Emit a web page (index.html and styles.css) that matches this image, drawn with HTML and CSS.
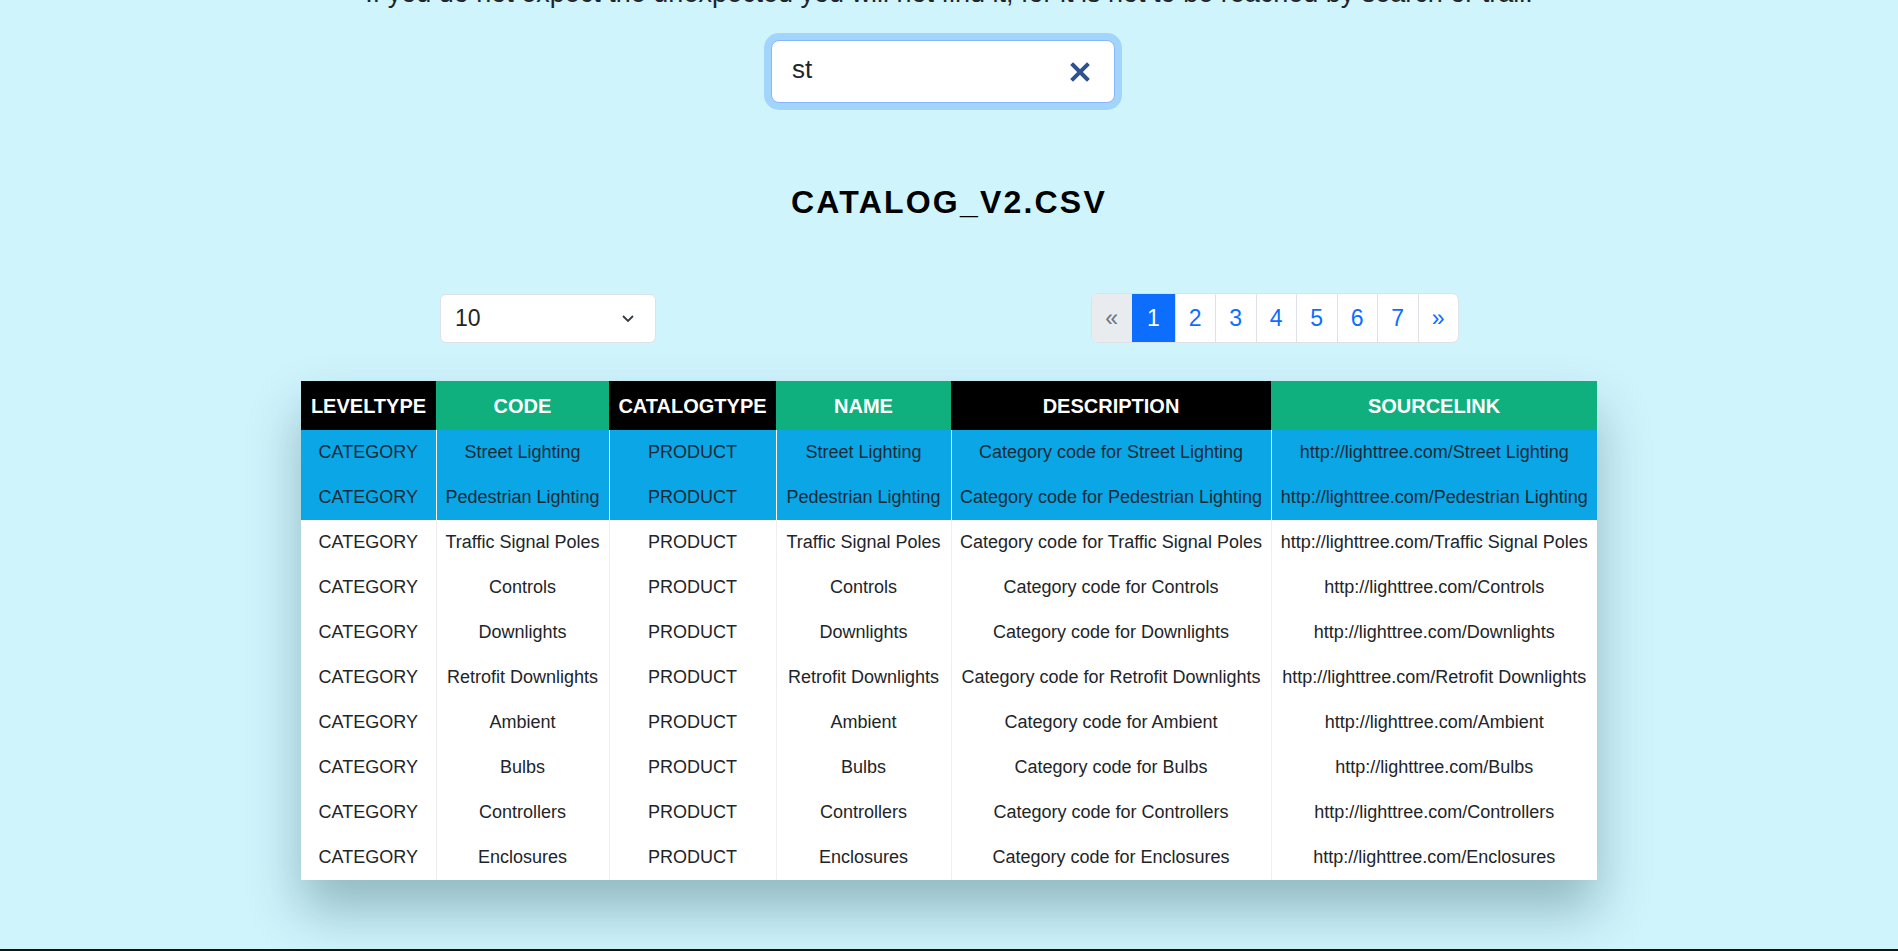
FILE: index.html
```html
<!DOCTYPE html>
<html lang="en">
<head>
<meta charset="utf-8">
<title>Catalog</title>
<link rel="stylesheet" href="styles.css">
</head>
<body>
<div class="page">
  <p class="quote">If you do not expect the unexpected you will not find it, for it is not to be reached by search or trail.</p>

  <div class="search">
    <input class="search-input" type="text" value="st" aria-label="Search">
    <button class="search-clear" type="button" aria-label="Clear">
      <svg width="20" height="20" viewBox="0 0 20 20"><path d="M3 3 L17 17 M17 3 L3 17" stroke="#2f5192" stroke-width="4" stroke-linecap="square" fill="none"/></svg>
    </button>
  </div>

  <h2 class="title">CATALOG_V2.CSV</h2>

  <div class="controls">
    <div class="select">
      <span class="select-value">10</span>
      <svg class="chevron" width="14" height="9" viewBox="0 0 14 9"><path d="M2 2 L7 7 L12 2" stroke="#343a40" stroke-width="1.8" fill="none"/></svg>
    </div>
    <nav class="pager">
      <span class="page-item disabled">&laquo;</span>
      <span class="page-item active">1</span>
      <span class="page-item">2</span>
      <span class="page-item">3</span>
      <span class="page-item">4</span>
      <span class="page-item">5</span>
      <span class="page-item">6</span>
      <span class="page-item">7</span>
      <span class="page-item">&raquo;</span>
    </nav>
  </div>

  <table class="data">
    <colgroup>
      <col class="c1"><col class="c2"><col class="c3"><col class="c4"><col class="c5"><col class="c6">
    </colgroup>
    <thead>
      <tr>
        <th class="h-dark">LEVELTYPE</th>
        <th class="h-green">CODE</th>
        <th class="h-dark">CATALOGTYPE</th>
        <th class="h-green">NAME</th>
        <th class="h-dark">DESCRIPTION</th>
        <th class="h-green">SOURCELINK</th>
      </tr>
    </thead>
    <tbody>
      <tr class="hit"><td>CATEGORY</td><td>Street Lighting</td><td>PRODUCT</td><td>Street Lighting</td><td>Category code for Street Lighting</td><td>http://lighttree.com/Street Lighting</td></tr>
      <tr class="hit"><td>CATEGORY</td><td>Pedestrian Lighting</td><td>PRODUCT</td><td>Pedestrian Lighting</td><td>Category code for Pedestrian Lighting</td><td>http://lighttree.com/Pedestrian Lighting</td></tr>
      <tr><td>CATEGORY</td><td>Traffic Signal Poles</td><td>PRODUCT</td><td>Traffic Signal Poles</td><td>Category code for Traffic Signal Poles</td><td>http://lighttree.com/Traffic Signal Poles</td></tr>
      <tr><td>CATEGORY</td><td>Controls</td><td>PRODUCT</td><td>Controls</td><td>Category code for Controls</td><td>http://lighttree.com/Controls</td></tr>
      <tr><td>CATEGORY</td><td>Downlights</td><td>PRODUCT</td><td>Downlights</td><td>Category code for Downlights</td><td>http://lighttree.com/Downlights</td></tr>
      <tr><td>CATEGORY</td><td>Retrofit Downlights</td><td>PRODUCT</td><td>Retrofit Downlights</td><td>Category code for Retrofit Downlights</td><td>http://lighttree.com/Retrofit Downlights</td></tr>
      <tr><td>CATEGORY</td><td>Ambient</td><td>PRODUCT</td><td>Ambient</td><td>Category code for Ambient</td><td>http://lighttree.com/Ambient</td></tr>
      <tr><td>CATEGORY</td><td>Bulbs</td><td>PRODUCT</td><td>Bulbs</td><td>Category code for Bulbs</td><td>http://lighttree.com/Bulbs</td></tr>
      <tr><td>CATEGORY</td><td>Controllers</td><td>PRODUCT</td><td>Controllers</td><td>Category code for Controllers</td><td>http://lighttree.com/Controllers</td></tr>
      <tr><td>CATEGORY</td><td>Enclosures</td><td>PRODUCT</td><td>Enclosures</td><td>Category code for Enclosures</td><td>http://lighttree.com/Enclosures</td></tr>
    </tbody>
  </table>

  <footer class="footer"></footer>
</div>
</body>
</html>
```

FILE: styles.css
```css
html, body {
  margin: 0;
  padding: 0;
  background: #cff4fc;
  height: 951px;
  overflow: hidden;
}

body {
  font-family: "Liberation Sans", Arial, sans-serif;
  color: #212529;
}

.page {
  display: flex;
  flex-direction: column;
  align-items: center;
}

.quote {
  margin: -22px 0 0;
  font-size: 27px;
  line-height: 31px;
  text-align: center;
  color: #212529;
  white-space: nowrap;
}

.search {
  margin-top: 31px;
  width: 344px;
  height: 63px;
  box-sizing: border-box;
  display: flex;
  align-items: center;
  background: #fff;
  border: 1px solid #86b7fe;
  border-radius: 8px;
  box-shadow: 0 0 0 7px #a3d4fb;
  margin-left: -12px;
}

.search-input {
  flex: 1;
  min-width: 0;
  border: 0;
  outline: none;
  background: transparent;
  font-family: "Liberation Sans", Arial, sans-serif;
  font-size: 26px;
  color: #212529;
  padding: 0 0 4px 20px;
}

.search-clear {
  border: 0;
  background: transparent;
  padding: 0;
  margin-right: 22px;
  width: 24px;
  height: 24px;
  display: flex;
  align-items: center;
  justify-content: center;
}

.title {
  margin: 80px 0 0;
  font-size: 32px;
  line-height: 38px;
  font-weight: 700;
  letter-spacing: 2.2px;
  color: #000;
}

.controls {
  margin-top: 72px;
  width: 1296px;
  box-sizing: border-box;
  padding: 0 138px 0 139px;
  display: flex;
  justify-content: space-between;
  align-items: flex-start;
}

.select {
  margin-top: 1px;
  width: 216px;
  height: 49px;
  box-sizing: border-box;
  background: #fff;
  border: 1px solid #dee2e6;
  border-radius: 6px;
  display: flex;
  align-items: center;
  justify-content: space-between;
  padding: 0 20px 0 14px;
  font-size: 23px;
}

.pager {
  width: 368px;
  height: 50px;
  box-sizing: border-box;
  display: flex;
  background: #fff;
  border: 1px solid #dee2e6;
  border-radius: 7px;
  overflow: hidden;
}

.page-item {
  flex: 1;
  display: flex;
  align-items: center;
  justify-content: center;
  font-size: 23px;
  color: #0d6efd;
  border-left: 1px solid #dee2e6;
}

.page-item:first-child {
  border-left: 0;
}

.page-item.disabled {
  background: #e9ecef;
  color: #6c757d;
}

.page-item.active {
  background: #0d6efd;
  color: #fff;
  border-left-color: #0d6efd;
  flex: 0 0 42px;
}

.data {
  margin-top: 38px;
  width: 1296px;
  table-layout: fixed;
  border-collapse: collapse;
  background: #fff;
  box-shadow: 0 30px 50px rgba(0, 45, 60, 0.3);
}

.c1 { width: 135px; }
.c2 { width: 173px; }
.c3 { width: 167px; }
.c4 { width: 175px; }
.c5 { width: 320px; }
.c6 { width: 326px; }

.data th {
  padding: 10px 4px 9px;
  line-height: 30px;
  font-size: 20px;
  font-weight: 700;
  color: #fff;
  text-align: center;
  white-space: nowrap;
}

.h-dark { background: #000; }
.h-green { background: #10b07e; }

.data td {
  padding: 9px 4px;
  line-height: 27px;
  font-size: 18px;
  text-align: center;
  white-space: nowrap;
  color: #212529;
  border-left: 1px solid #efefef;
}

.data td:first-child {
  border-left: 0;
}

.data tr.hit td {
  background: #0aa6e6;
  color: #1c2a38;
  border-left-color: #ffffff;
}

.footer {
  margin-top: 69px;
  width: 100%;
  height: 2px;
  background: #111;
}
```
